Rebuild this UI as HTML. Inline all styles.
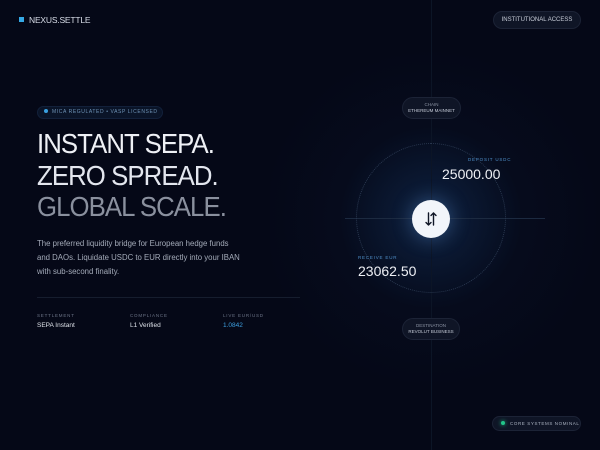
<!DOCTYPE html>
<html><head><meta charset="utf-8"><style>
*{margin:0;padding:0;box-sizing:border-box}
body{width:600px;height:450px;overflow:hidden;background:#050817;font-family:"Liberation Sans",sans-serif;position:relative;color:#e6e9f0}
.abs{position:absolute}
.logo{left:19px;top:15px;font-size:8.5px;color:#d8dde8;letter-spacing:-0.2px}
.logo i{display:inline-block;width:5px;height:5px;background:#35a9e6;margin-right:5px;vertical-align:1px}
.pill{border-radius:20px;background:#0f1526;border:1px solid #1c2336}
.h{left:37px;font-size:28px;letter-spacing:-1px;line-height:32px;transform:scaleX(0.92);transform-origin:left}
.lab{font-size:4.5px;letter-spacing:0.8px;color:#6d7588}
</style></head><body>
<div class="abs" style="left:270px;top:40px;width:330px;height:360px;background:radial-gradient(circle at 161px 178px,rgba(30,80,140,0.35),rgba(10,30,60,0.15) 90px,rgba(5,8,23,0) 170px)"></div>
<div class="abs" style="left:431px;top:0;width:1px;height:450px;background:#0c1526"></div>
<div class="abs" style="left:345px;top:218px;width:200px;height:1px;background:#1c2a40"></div>
<div class="abs" style="left:356px;top:143px;width:150px;height:150px;border-radius:50%;border:1px dotted #2a3850"></div>
<div class="abs logo"><i></i>NEXUS.SETTLE</div>
<div class="abs pill" style="left:493px;top:11px;width:88px;height:18px;font-size:6px;color:#c8cdd8;text-align:center;line-height:16px">INSTITUTIONAL ACCESS</div>
<div class="abs pill" style="left:37px;top:106px;width:126px;height:13px;background:#0a1428;border-color:#12203a;font-size:5px;letter-spacing:0.6px;color:#6f93b6;line-height:11px;padding-left:6px"><span style="display:inline-block;width:4px;height:4px;border-radius:50%;background:#3aa0e0;margin-right:4px;vertical-align:0"></span>MICA REGULATED • VASP LICENSED</div>
<div class="abs h" style="top:128px;color:#eef0f5">INSTANT SEPA.</div>
<div class="abs h" style="top:160px;color:#e3e6ee">ZERO SPREAD.</div>
<div class="abs h" style="top:191px;color:#8a909e">GLOBAL SCALE.</div>
<div class="abs" style="left:37px;top:237px;font-size:7.8px;line-height:14px;color:#a4abb9;white-space:nowrap">The preferred liquidity bridge for European hedge funds<br>and DAOs. Liquidate USDC to EUR directly into your IBAN<br>with sub-second finality.</div>
<div class="abs" style="left:37px;top:297px;width:263px;height:1px;background:#161d2e"></div>
<div class="abs lab" style="left:37px;top:313px">SETTLEMENT</div>
<div class="abs lab" style="left:130px;top:313px">COMPLIANCE</div>
<div class="abs lab" style="left:223px;top:313px">LIVE EUR/USD</div>
<div class="abs" style="left:37px;top:322px;font-size:6.5px;color:#dfe3ea">SEPA Instant</div>
<div class="abs" style="left:130px;top:322px;font-size:6.5px;color:#dfe3ea">L1 Verified</div>
<div class="abs" style="left:223px;top:322px;font-size:6.5px;color:#3d9fe0">1.0842</div>
<div class="abs pill" style="left:402px;top:97px;width:59px;height:22px;text-align:center;font-size:4.5px;color:#8b93a3;line-height:6px;padding-top:4px">CHAIN<br><span style="color:#c4cad6">ETHEREUM MAINNET</span></div>
<div class="abs pill" style="left:402px;top:318px;width:58px;height:22px;text-align:center;font-size:4.5px;color:#8b93a3;line-height:6px;padding-top:4px">DESTINATION<br><span style="color:#c4cad6">REVOLUT BUSINESS</span></div>
<div class="abs lab" style="left:468px;top:157px;color:#4f8fc8">DEPOSIT USDC</div>
<div class="abs" style="left:442px;top:166px;font-size:14px;color:#eef0f5">25000.00</div>
<div class="abs lab" style="left:358px;top:255px;color:#4f8fc8">RECEIVE EUR</div>
<div class="abs" style="left:358px;top:263px;font-size:14px;color:#eef0f5">23062.50</div>
<div class="abs" style="left:412px;top:200px;width:38px;height:38px;border-radius:50%;background:#f2f5fa;box-shadow:0 0 20px rgba(120,180,255,0.35)">
<svg width="38" height="38" viewBox="0 0 38 38" fill="none" stroke="#101626" stroke-width="1.4" stroke-linecap="round" stroke-linejoin="round"><path d="M16.5 13v12M14 22.5l2.5 2.5 2.5-2.5M21.5 25V13M19 15.5l2.5-2.5 2.5 2.5"/></svg></div>
<div class="abs pill" style="left:492px;top:416px;width:89px;height:15px;font-size:4.5px;letter-spacing:0.6px;color:#aab2c0;line-height:13px;padding-left:8px"><span style="display:inline-block;width:4px;height:4px;border-radius:50%;background:#22c58a;box-shadow:0 0 4px #22c58a;margin-right:5px"></span>CORE SYSTEMS NOMINAL</div>
</body></html>
